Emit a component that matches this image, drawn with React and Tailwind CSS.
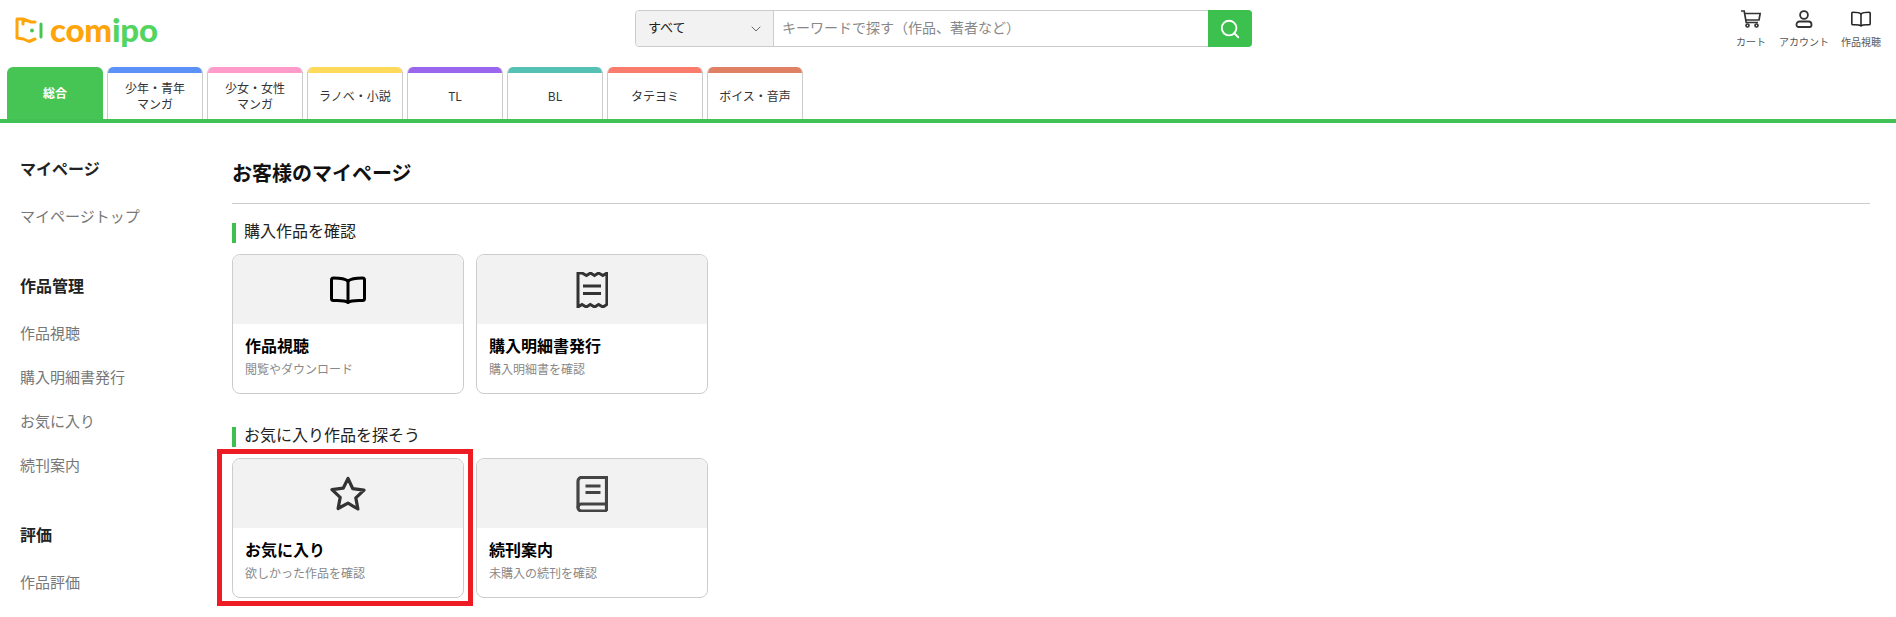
import { ChevronDown, Search } from 'lucide-react'

const font = 'font-["Noto_Sans_CJK_JP","Noto_Sans",sans-serif]'

const TABS = [
  { label: ['少年・青年', 'マンガ'], color: 'bg-[#5c92f7]' },
  { label: ['少女・女性', 'マンガ'], color: 'bg-[#ff9bcb]' },
  { label: ['ラノベ・小説'], color: 'bg-[#ffd95a]' },
  { label: ['TL'], color: 'bg-[#9b66ee]' },
  { label: ['BL'], color: 'bg-[#55c1b5]' },
  { label: ['タテヨミ'], color: 'bg-[#f97c6c]' },
  { label: ['ボイス・音声'], color: 'bg-[#e08166]' },
]

const SIDE = [
  { title: 'マイページ', items: ['マイページトップ'] },
  { title: '作品管理', items: ['作品視聴', '購入明細書発行', 'お気に入り', '続刊案内'] },
  { title: '評価', items: ['作品評価'] },
]

function CartIcon() {
  return (
    <svg className="w-5 h-[18px]" viewBox="0 0 20 18" fill="none" stroke="#333" strokeWidth={1.7}>
      <path d="M0 1h3.200l2 11.500h11.800" />
      <path d="M3.800 3.500h15.400l-1.200 6.500H4.800" />
      <circle cx="6.500" cy="15.500" r="1.500" />
      <circle cx="15.500" cy="15.500" r="1.500" />
    </svg>
  )
}

function UserIcon() {
  return (
    <svg className="w-5 h-[18px]" viewBox="0 0 20 18" fill="none" stroke="#333" strokeWidth={1.8}>
      <circle cx="10" cy="5" r="3.900" />
      <path d="M5.500 11.500h9a3 3 0 0 1 3 3v.5a2 2 0 0 1-2 2h-11a2 2 0 0 1-2-2v-.5a3 3 0 0 1 3-3z" />
    </svg>
  )
}

function OpenBook({ className, width = 1.6 }) {
  return (
    <svg className={className} viewBox="0 0 36 28" fill="none" stroke="currentColor" strokeWidth={width} strokeLinejoin="round">
      <path d="M18 5C15 2.500 10 2 3.500 2Q1.500 2 1.500 4v18.500q0 2 2 2C10 24.500 15 24 18 26.500c3-2.500 8-2 14.500-2q2 0 2-2V4q0-2-2-2C26 2 21 2.500 18 5z" />
      <path d="M18 5v21" />
    </svg>
  )
}

function ReceiptIcon() {
  return (
    <svg className="w-8 h-9" viewBox="0 0 32 36" fill="none" stroke="#333" strokeWidth={3}>
      <path d="M1.500 1v34l4-2.500 4.300 2.500 4-2.500 4.300 2.500 4-2.500 4.300 2.500 4-2.500V1l-4 2.500L22 1l-4 2.500L14 1l-4 2.500L5.500 1z" transform="translate(0.500 0)" />
      <path d="M7 14h18M7 21.500h18" />
    </svg>
  )
}

function StarIcon() {
  return (
    <svg className="w-9 h-9" viewBox="0 0 36 36" fill="none" stroke="#333" strokeWidth={3.200} strokeLinejoin="round">
      <path d="M18 2.500l4.800 10.200 11.200 1.500-8.200 7.700 2.100 11.100L18 27.100 8.100 32.500l2.100-11.100L2 13.700l11.200-1.500z" />
    </svg>
  )
}

function BookIcon() {
  return (
    <svg className="w-8 h-9" viewBox="0 0 32 36" fill="none" stroke="#444" strokeWidth={3.200}>
      <path d="M31 28H5.500a3.500 3.500 0 0 0 0 7H31" />
      <path d="M2 31.500V5a3.500 3.500 0 0 1 3.500-3.500H30.500V35" />
      <path d="M9.500 10h15M9.500 16.500h15" />
    </svg>
  )
}

function Logo() {
  return (
    <div className="flex items-center gap-[5px]">
      <svg className="w-[30px] h-[26px] shrink-0" viewBox="0 0 30 26" fill="none" strokeLinecap="round" strokeLinejoin="round">
        <path d="M8 7V2l8 3h4M8 2H2v19l6.500 1 5.500 2.500 6-2.500" stroke="#ffa40a" strokeWidth={3} />
        <circle cx="17" cy="13.500" r="1.900" fill="#46c755" />
        <path d="M26 7v13" stroke="#46c755" strokeWidth={3} />
      </svg>
      <span className="font-['Lato',sans-serif] text-[33px] leading-none font-black tracking-[-0.2px] text-[#ffa40a]">
        com<span className="text-[#52d45f]">ipo</span>
      </span>
    </div>
  )
}

function Card({ icon, title, sub, marked }) {
  return (
    <div className="relative w-[232px]">
      <div className="h-[140px] rounded-lg border border-[#ccc] overflow-hidden bg-white">
        <div className="h-[69px] bg-[#f2f2f2] flex items-center justify-center text-black">{icon}</div>
        <div className="pl-3 pt-[9px]">
          <p className="text-base font-bold leading-6 text-black">{title}</p>
          <p className="mt-[2px] text-xs leading-5 text-[#888]">{sub}</p>
        </div>
      </div>
      {marked && <div className="absolute -left-[15px] -right-[9px] -top-[9px] -bottom-[8px] border-[5px] border-[#ed1c24]" />}
    </div>
  )
}

function Section({ title, children }) {
  return (
    <section>
      <h3 className="h-5 border-l-4 border-[#3cc04e] pl-2 text-base leading-[15px] text-[#222]">{title}</h3>
      <div className="mt-[11px] flex gap-3">{children}</div>
    </section>
  )
}

export default function App() {
  return (
    <div className={`h-[617px] overflow-hidden bg-white ${font}`}>
      {/* ヘッダー */}
      <header className="h-[67px] flex items-start justify-between">
        <div className="w-[635px] shrink-0 pl-[15px] pt-[13px]"><Logo /></div>
        <div className="mt-[10px] flex h-[37px] w-[617px] shrink-0 rounded border border-[#ccc] text-sm">
          <div className="w-[138px] flex items-center justify-between pl-[12px] pr-[9px] bg-[#f2f2f2] border-r border-[#ccc] rounded-l text-[#222] text-[13px]">
            <span className="pb-[3px]">すべて</span>
            <ChevronDown className="w-4 h-4 text-[#666]" strokeWidth={1.5} />
          </div>
          <div className="flex-1 flex items-center pl-[8px] pb-[3px] text-[#888]">キーワードで探す（作品、著者など）</div>
          <div className="-m-px w-[44px] flex items-center justify-center bg-[#3cc04e] rounded-r">
            <Search className="w-[22px] h-[22px] text-white" strokeWidth={2} />
          </div>
        </div>
        <div className="w-[644px] shrink-0 pt-[10px] pr-[6px] flex justify-end text-[10px] leading-4 text-[#555]">
          <div className="w-[50px] flex flex-col items-center gap-[6px]"><CartIcon />カート</div>
          <div className="w-[56px] flex flex-col items-center gap-[6px]"><UserIcon />アカウント</div>
          <div className="w-[58px] flex flex-col items-center gap-[6px]"><OpenBook className="w-5 h-[18px] text-[#222]" width={2.800} />作品視聴</div>
        </div>
      </header>

      {/* タブ */}
      <nav className="h-[56px] flex gap-1 pl-[7px] border-b-4 border-[#42c254]">
        <div className="w-[96px] rounded-t-md bg-[#46c555] flex items-center justify-center text-xs font-bold text-white">総合</div>
        {TABS.map(t => (
          <div key={t.color} className="w-[96px] rounded-t-md overflow-hidden border-x border-[#ccc] bg-white flex flex-col">
            <div className={`h-[6px] -mx-px ${t.color}`} />
            <div className="flex-1 flex flex-col items-center justify-center pb-px text-xs leading-4 text-[#333]">
              {t.label.map(l => <span key={l}>{l}</span>)}
            </div>
          </div>
        ))}
      </nav>

      <div className="flex pr-[26px]">
        {/* サイドバー */}
        <aside className="w-[232px] pl-[20px] pt-[33px] shrink-0">
          {SIDE.map(s => (
            <div key={s.title} className="mb-[46px]">
              <h2 className="text-base font-bold leading-6 text-[#222]">{s.title}</h2>
              <ul className="mt-[25px] flex flex-col gap-[22px]">
                {s.items.map(i => <li key={i} className="text-[15px] leading-[22px] text-[#777]">{i}</li>)}
              </ul>
            </div>
          ))}
        </aside>

        {/* メイン */}
        <main className="flex-1 pt-[36px]">
          <h1 className="text-xl font-bold leading-7 text-[#111] pb-[16px] border-b border-[#ccc]">お客様のマイページ</h1>
          <div className="mt-[19px] flex flex-col gap-[33px]">
            <Section title="購入作品を確認">
              <Card icon={<OpenBook className="w-9 h-7" width={3} />} title="作品視聴" sub="閲覧やダウンロード" />
              <Card icon={<ReceiptIcon />} title="購入明細書発行" sub="購入明細書を確認" />
            </Section>
            <Section title="お気に入り作品を探そう">
              <Card icon={<StarIcon />} title="お気に入り" sub="欲しかった作品を確認" marked />
              <Card icon={<BookIcon />} title="続刊案内" sub="未購入の続刊を確認" />
            </Section>
          </div>
        </main>
      </div>
    </div>
  )
}
